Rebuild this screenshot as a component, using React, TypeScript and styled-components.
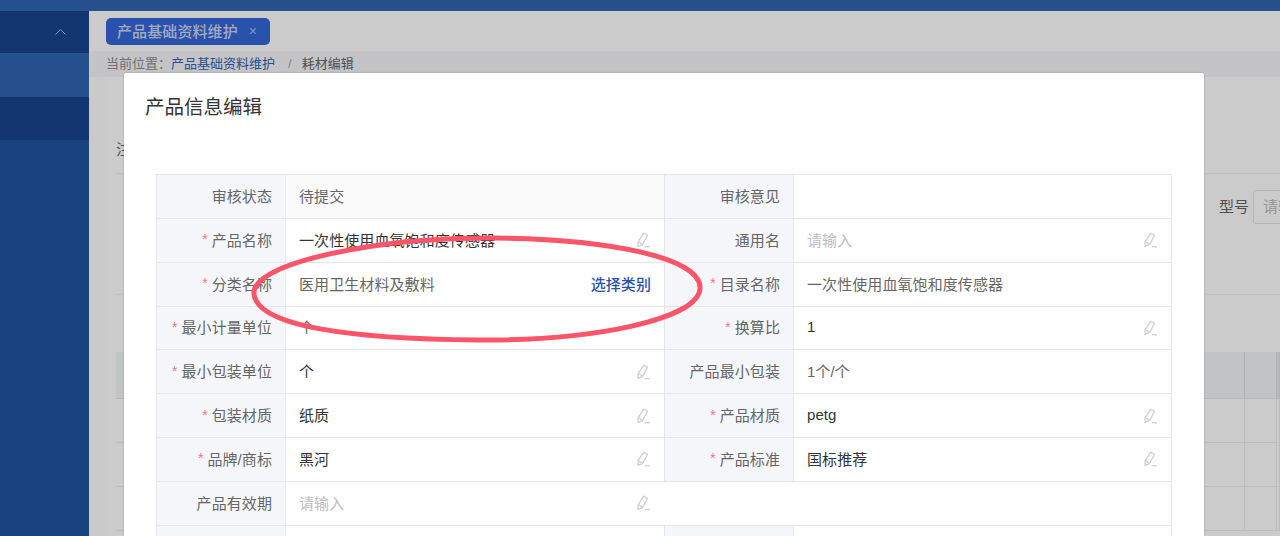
import * as React from "react";
import styled, { createGlobalStyle } from "styled-components";

type Field = {
  label?: string;
  required?: boolean;
  value?: string;
  tone?: "plain" | "muted" | "empty";
  editable?: boolean;
  action?: string;
  readonlyBg?: boolean;
  wide?: boolean;
  clipped?: boolean;
};

const fields: Field[] = [
  { label: "审核状态", value: "待提交", tone: "muted", readonlyBg: true },
  { label: "审核意见" },
  { label: "产品名称", required: true, value: "一次性使用血氧饱和度传感器", editable: true },
  { label: "通用名", value: "请输入", tone: "empty", editable: true },
  { label: "分类名称", required: true, value: "医用卫生材料及敷料", tone: "muted", action: "选择类别" },
  { label: "目录名称", required: true, value: "一次性使用血氧饱和度传感器", tone: "muted" },
  { label: "最小计量单位", required: true, value: "个", tone: "muted" },
  { label: "换算比", required: true, value: "1", editable: true },
  { label: "最小包装单位", required: true, value: "个", editable: true },
  { label: "产品最小包装", value: "1个/个", tone: "muted" },
  { label: "包装材质", required: true, value: "纸质", editable: true },
  { label: "产品材质", required: true, value: "petg", editable: true },
  { label: "品牌/商标", required: true, value: "黑河", editable: true },
  { label: "产品标准", required: true, value: "国标推荐", editable: true },
  { label: "产品有效期", value: "请输入", tone: "empty", editable: true, wide: true },
  {},
  { value: "请输入", tone: "empty", clipped: true },
];

const EditIcon = () => (
  <PencilSvg width="16" height="16" viewBox="0 0 16 16" fill="none" stroke="#cdcdcd" strokeWidth="1.2">
    <path d="M8.8 1.2 L12.6 3.2 L7.4 12.6 L3 14.4 L3 9.8 Z" strokeLinejoin="round" />
    <path d="M3.4 9.9 L7.2 12" />
    <path d="M9.8 14.7 H15" />
  </PencilSvg>
);

const FormCell = ({ field }: { field: Field }) => (
  <>
    <LabelCell>
      {field.required && <Star>*</Star>}
      {field.label}
    </LabelCell>
    <ValueCell $readonly={field.readonlyBg} $clipped={field.clipped}>
      <ValueText $tone={field.tone}>{field.value}</ValueText>
      {field.editable && <EditIcon />}
      {field.action && <ActionLink>{field.action}</ActionLink>}
    </ValueCell>
    {field.wide && <BlankCell />}
  </>
);

export default function App() {
  return (
    <>
      <GlobalStyle />
      <Page>
        <TopBar />
        <Shell>
          <Sidebar>
            <MenuGroup>
              <svg width="11" height="6" viewBox="0 0 11 6" fill="none" stroke="#a9bcdf" strokeWidth="1">
                <path d="M0.5 5.5 L5.5 0.5 L10.5 5.5" />
              </svg>
            </MenuGroup>
            <MenuItem $active />
            <MenuItem />
          </Sidebar>

          <Main>
            <TabBar>
              <Tab>
                产品基础资料维护
                <TabClose>×</TabClose>
              </Tab>
            </TabBar>
            <Breadcrumb>
              <span>当前位置：</span>
              <CrumbLink>产品基础资料维护</CrumbLink>
              <CrumbSep>/</CrumbSep>
              <CrumbLast>耗材编辑</CrumbLast>
            </Breadcrumb>

            <Card>
              <NoticeRow>注</NoticeRow>
              <FilterRow>
                <FilterLabel>型号</FilterLabel>
                <FilterInput>请输入</FilterInput>
              </FilterRow>
              <ListHead>
                <ListHeadCell />
                <ListHeadCell />
                <ListHeadCell $fixed />
              </ListHead>
              {[0, 1, 2].map((row) => (
                <ListRow key={row}>
                  <ListCell />
                  <ListCell />
                  <ListCell />
                </ListRow>
              ))}
            </Card>
          </Main>
        </Shell>

        <Mask />

        <Modal>
          <ModalTitle>产品信息编辑</ModalTitle>
          <FormGrid>
            {fields.map((field, i) => (
              <FormCell key={i} field={field} />
            ))}
          </FormGrid>
        </Modal>

        <Annotation width="1280" height="536" viewBox="0 0 1280 536" fill="none">
          <path
            d="M254 292 C256 262 380 237 495 238 C610 239 701 258 700 288 C699 320 590 341 478 340 C360 339 250 328 254 290 Z"
            stroke="#fc5468"
            strokeWidth="5"
          />
        </Annotation>
      </Page>
    </>
  );
}

const GlobalStyle = createGlobalStyle`
  html, body {
    margin: 0;
    height: 100%;
    overflow: hidden;
    font-family: "Liberation Sans", "Noto Sans CJK SC", sans-serif;
  }
`;

const Page = styled.div`
  position: relative;
  width: 1280px;
  height: 536px;
  overflow: hidden;
  display: flex;
  flex-direction: column;
  background: #fdfdfe;
`;

const TopBar = styled.div`
  height: 11px;
  flex: none;
  background: #3164b3;
`;

const Shell = styled.div`
  flex: 1;
  display: flex;
  min-height: 0;
`;

const Sidebar = styled.div`
  width: 89px;
  flex: none;
  background: #20549f;
`;

const MenuGroup = styled.div`
  height: 42px;
  background: #18448d;
  display: flex;
  align-items: center;
  justify-content: flex-end;
  padding-right: 23px;
  box-sizing: border-box;
`;

const MenuItem = styled.div<{ $active?: boolean }>`
  height: ${(p) => (p.$active ? 44 : 43)}px;
  background: ${(p) => (p.$active ? "#3164b3" : "#18448d")};
`;

const Main = styled.div`
  flex: 1;
  min-width: 0;
  display: flex;
  flex-direction: column;
`;

const TabBar = styled.div`
  height: 40px;
  flex: none;
  box-sizing: border-box;
  padding: 7px 0 0 17px;
  background: #fefefe;
`;

const Tab = styled.div`
  width: 164px;
  height: 27px;
  box-sizing: border-box;
  padding-left: 11px;
  border-radius: 5px;
  background: #3467d8;
  color: #ccd6f0;
  font-size: 15px;
  font-weight: 500;
  letter-spacing: 0.1px;
  line-height: 27px;
  display: flex;
  align-items: center;
`;

const TabClose = styled.span`
  margin-left: 11px;
  font-size: 14px;
  font-weight: 400;
  color: #a9bbe6;
`;

const Breadcrumb = styled.div`
  height: 26px;
  flex: none;
  box-sizing: border-box;
  padding: 4px 0 0 17px;
  background: #f5f6f9;
  color: #8d8d8d;
  font-size: 13px;
  line-height: 18px;
  display: flex;
`;

const CrumbLink = styled.span`
  color: #3164b3;
`;

const CrumbSep = styled.span`
  margin: 0 10px 0 13px;
  color: #a8a8a8;
`;

const CrumbLast = styled.span`
  color: #666;
`;

const Card = styled.div`
  flex: 1;
  margin-left: 17px;
  padding-left: 10px;
  overflow: hidden;
  background: #fefefe;
`;

const NoticeRow = styled.div`
  height: 97px;
  box-sizing: border-box;
  padding-top: 62px;
  font-size: 15px;
  line-height: 22px;
  color: #666;
  border-bottom: 1px solid #f0f0f2;
`;

const FilterRow = styled.div`
  height: 121px;
  box-sizing: border-box;
  padding-top: 16px;
  margin-right: -90px;
  display: flex;
  justify-content: flex-end;
  align-items: flex-start;
  border-bottom: 1px solid #f0f0f2;
`;

const FilterLabel = styled.span`
  margin-right: 4px;
  font-size: 15px;
  line-height: 34px;
  color: #666;
`;

const FilterInput = styled.div`
  width: 117px;
  height: 34px;
  box-sizing: border-box;
  padding-left: 9px;
  border: 1px solid #e3e3e6;
  border-radius: 3px;
  font-size: 15px;
  line-height: 32px;
  color: #bbb;
`;

const ListRowBase = styled.div`
  display: grid;
  grid-template-columns: 1129px 32px 1fr;
`;

const ListHead = styled(ListRowBase)`
  height: 47px;
  margin-top: 57px;
  background: #f3f4f6;
  border-bottom: 1px solid #e4e4e6;
  box-sizing: border-box;
`;

const ListHeadCell = styled.div<{ $fixed?: boolean }>`
  border-right: 1px solid #dcdcdf;
  background: ${(p) => (p.$fixed ? "#e9eaec" : "transparent")};
`;

const ListRow = styled(ListRowBase)`
  height: 44px;
  box-sizing: border-box;
  border-bottom: 1px solid #eeeef0;
`;

const ListCell = styled.div`
  border-right: 1px solid #ececee;
`;

const Mask = styled.div`
  position: absolute;
  inset: 0;
  background: rgba(0, 0, 0, 0.2);
`;

const Modal = styled.div`
  position: absolute;
  left: 124px;
  top: 73px;
  width: 1080px;
  height: 520px;
  box-sizing: border-box;
  padding: 0 32px;
  background: #fff;
  border-radius: 2px;
  box-shadow: 0 0 2px rgba(0, 0, 0, 0.25);
`;

const ModalTitle = styled.h2`
  margin: 0 0 0 -11px;
  height: 101px;
  box-sizing: border-box;
  padding-top: 20px;
  font-size: 19.5px;
  font-weight: 400;
  line-height: 28px;
  color: #333;
`;

const FormGrid = styled.div`
  display: grid;
  grid-template-columns: 130px 378px 130px 377px;
  grid-auto-rows: 43.85px;
  border-top: 1px solid #e6e6ea;
  border-right: 1px solid #e6e6ea;
  width: 1016px;
  box-sizing: border-box;
`;

const CellBase = styled.div`
  box-sizing: border-box;
  display: flex;
  align-items: center;
  border-bottom: 1px solid #e6e6ea;
  font-size: 15px;
  letter-spacing: 0.08px;
  min-width: 0;
`;

const LabelCell = styled(CellBase)`
  justify-content: flex-end;
  padding: 0 13px 2px 0;
  background: #f5f6fa;
  color: #666;
  border-left: 1px solid #e6e6ea;
  border-right: 1px solid #ececf0;
`;

const Star = styled.span`
  margin-right: 4px;
  font-size: 14px;
  color: #fb6f80;
`;

const ValueCell = styled(CellBase)<{ $readonly?: boolean; $clipped?: boolean }>`
  justify-content: space-between;
  padding: ${(p) => (p.$clipped ? "7px" : "0")} 13px 2px 13px;
  background: ${(p) => (p.$readonly ? "#fafafa" : "#fff")};
  align-items: ${(p) => (p.$clipped ? "flex-start" : "center")};
`;

const BlankCell = styled(CellBase)`
  grid-column: span 2;
`;

const ValueText = styled.span<{ $tone?: Field["tone"] }>`
  color: ${(p) => (p.$tone === "empty" ? "#bdbdbd" : p.$tone === "muted" ? "#666" : "#333")};
`;

const PencilSvg = styled.svg`
  flex: none;
  margin-top: 2px;
`;

const ActionLink = styled.span`
  color: #2a52ad;
  font-weight: 500;
`;

const Annotation = styled.svg`
  position: absolute;
  left: 0;
  top: 0;
  pointer-events: none;
`;
